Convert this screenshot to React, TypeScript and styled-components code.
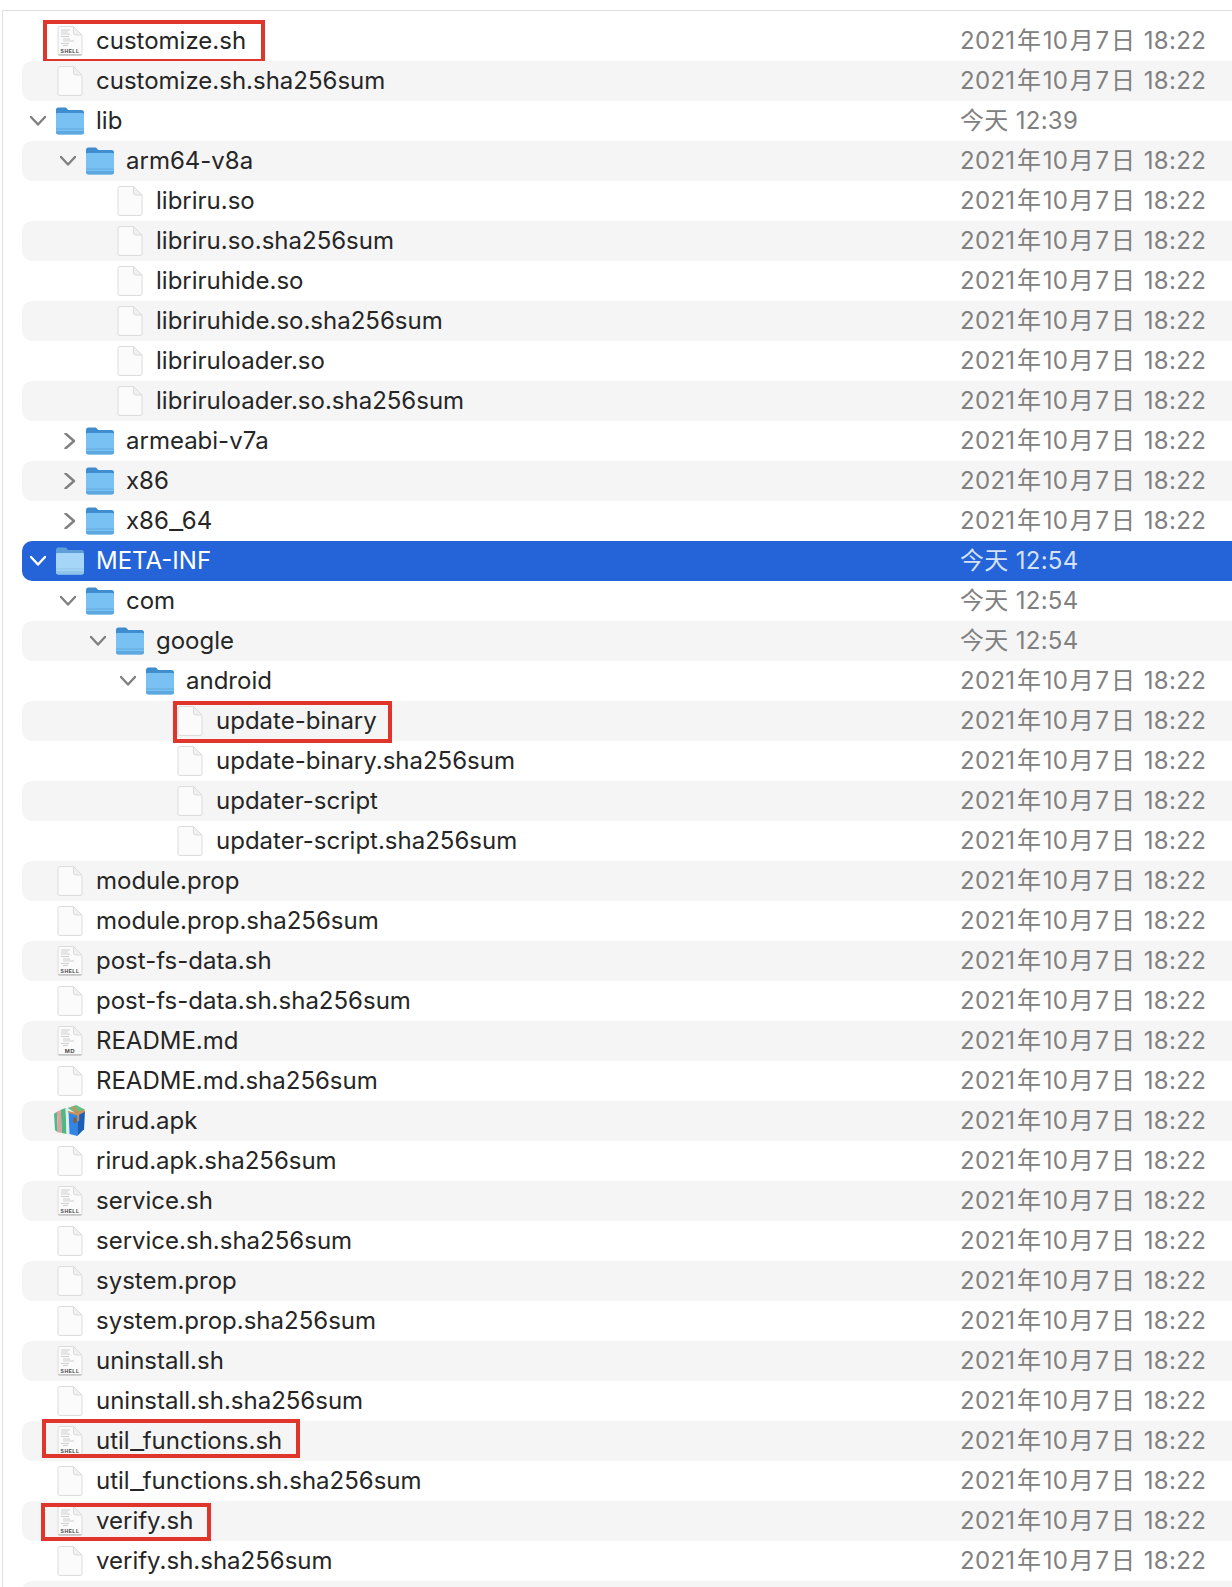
import React from "react";
import styled, { createGlobalStyle } from "styled-components";

const GlobalStyle = createGlobalStyle`
  html, body {
    margin: 0;
    padding: 0;
    background: #fff;
  }
`;

type Kind = "folder" | "file" | "shell" | "md" | "apk";
type Entry = {
  name: string;
  depth: number;
  kind: Kind;
  open?: boolean;
  date?: string;
  selected?: boolean;
  mark?: { left: number; width: number; top: number; height: number };
};

const OLD = "2021年10月7日 18:22";

const entries: Entry[] = [
  { name: "customize.sh", depth: 0, kind: "shell", mark: { left: 21, width: 222, top: -1, height: 43 } },
  { name: "customize.sh.sha256sum", depth: 0, kind: "file" },
  { name: "lib", depth: 0, kind: "folder", open: true, date: "今天 12:39" },
  { name: "arm64-v8a", depth: 1, kind: "folder", open: true },
  { name: "libriru.so", depth: 2, kind: "file" },
  { name: "libriru.so.sha256sum", depth: 2, kind: "file" },
  { name: "libriruhide.so", depth: 2, kind: "file" },
  { name: "libriruhide.so.sha256sum", depth: 2, kind: "file" },
  { name: "libriruloader.so", depth: 2, kind: "file" },
  { name: "libriruloader.so.sha256sum", depth: 2, kind: "file" },
  { name: "armeabi-v7a", depth: 1, kind: "folder", open: false },
  { name: "x86", depth: 1, kind: "folder", open: false },
  { name: "x86_64", depth: 1, kind: "folder", open: false },
  { name: "META-INF", depth: 0, kind: "folder", open: true, date: "今天 12:54", selected: true },
  { name: "com", depth: 1, kind: "folder", open: true, date: "今天 12:54" },
  { name: "google", depth: 2, kind: "folder", open: true, date: "今天 12:54" },
  { name: "android", depth: 3, kind: "folder", open: true },
  { name: "update-binary", depth: 4, kind: "file", mark: { left: 151, width: 219, top: 0, height: 42 } },
  { name: "update-binary.sha256sum", depth: 4, kind: "file" },
  { name: "updater-script", depth: 4, kind: "file" },
  { name: "updater-script.sha256sum", depth: 4, kind: "file" },
  { name: "module.prop", depth: 0, kind: "file" },
  { name: "module.prop.sha256sum", depth: 0, kind: "file" },
  { name: "post-fs-data.sh", depth: 0, kind: "shell" },
  { name: "post-fs-data.sh.sha256sum", depth: 0, kind: "file" },
  { name: "README.md", depth: 0, kind: "md" },
  { name: "README.md.sha256sum", depth: 0, kind: "file" },
  { name: "rirud.apk", depth: 0, kind: "apk" },
  { name: "rirud.apk.sha256sum", depth: 0, kind: "file" },
  { name: "service.sh", depth: 0, kind: "shell" },
  { name: "service.sh.sha256sum", depth: 0, kind: "file" },
  { name: "system.prop", depth: 0, kind: "file" },
  { name: "system.prop.sha256sum", depth: 0, kind: "file" },
  { name: "uninstall.sh", depth: 0, kind: "shell" },
  { name: "uninstall.sh.sha256sum", depth: 0, kind: "file" },
  { name: "util_functions.sh", depth: 0, kind: "shell", mark: { left: 20, width: 258, top: -2, height: 39 } },
  { name: "util_functions.sh.sha256sum", depth: 0, kind: "file" },
  { name: "verify.sh", depth: 0, kind: "shell", mark: { left: 19, width: 170, top: 2, height: 38 } },
  { name: "verify.sh.sha256sum", depth: 0, kind: "file" },
];

const Chevron: React.FC<{ open: boolean; color: string }> = ({ open, color }) => (
  <ChevronSvg viewBox="0 0 16 16">
    <path
      d={open ? "M1 4l7 7.5L15 4" : "M5.5 0.5L14 8l-8.5 7.5"}
      fill="none"
      stroke={color}
      strokeWidth="2.4"
      strokeLinecap="round"
      strokeLinejoin="round"
    />
  </ChevronSvg>
);

const FolderIcon: React.FC<{ selected?: boolean }> = ({ selected }) => (
  <IconSvg viewBox="0 0 28 28">
    <path
      d="M0 3a2.5 2.5 0 0 1 2.5-2.5h6.2c1.2 0 1.8.5 2.6 1.4l1 1.1H25.5A2.5 2.5 0 0 1 28 5.5V12H0z"
      fill={selected ? "#5f9ed6" : "#3f8ccf"}
    />
    <path
      d="M0 7.4c0-.8.6-1.4 1.4-1.4h25.2c.8 0 1.4.6 1.4 1.4V25a2.5 2.5 0 0 1-2.5 2.5h-23A2.5 2.5 0 0 1 0 25z"
      fill={selected ? "#a5d6f7" : "#79c1f3"}
    />
    <rect x="0" y="21.5" width="28" height="1" fill={selected ? "#8fc4ea" : "#5ea9e0"} />
    <path
      d="M0 24h28v1a2.5 2.5 0 0 1-2.5 2.5h-23A2.5 2.5 0 0 1 0 25z"
      fill={selected ? "#8fc4ea" : "#5da8df"}
    />
  </IconSvg>
);

const Sheet: React.FC = () => (
  <>
    <path
      d="M3 .5h13.5L25 9v18.5a2 2 0 0 1-2 2H3a2 2 0 0 1-2-2v-25a2 2 0 0 1 2-2z"
      fill="#fbfbfb"
      stroke="#dcdcdc"
      strokeWidth="1"
    />
    <path d="M16.5.5V7a2 2 0 0 0 2 2H25z" fill="#f0f0f0" stroke="#dcdcdc" strokeWidth="1" />
  </>
);

const FileIcon: React.FC = () => (
  <IconSvg viewBox="0 0 26 30">
    <Sheet />
  </IconSvg>
);

const ScriptIcon: React.FC<{ label: string }> = ({ label }) => (
  <IconSvg viewBox="0 0 26 30">
    <Sheet />
    <path
      d="M4 4h9M4 6h7M4 8h9M4 10.5h8M6 13h7M6 15h11M4 17.5h8M6 19.5h5"
      stroke="#cfcfcf"
      strokeWidth="1"
      fill="none"
    />
    <rect x="1.5" y="28" width="23" height="1.5" fill="#c4c4c4" />
    <IconLabel x="13" y="26.5" $small={label.length > 2}>
      {label}
    </IconLabel>
  </IconSvg>
);

const ApkIcon: React.FC = () => (
  <ApkSvg viewBox="0 0 34 32">
    <path d="M1 9l3-2 1 21-3-2z" fill="#45c08c" />
    <path d="M4 7l4-2 1 24-4-1z" fill="#ee9ba0" />
    <path d="M8 5l5-2 1 27-5-1z" fill="#4fb984" />
    <path d="M13 3l3-1 1 29-3-1z" fill="#e8eef0" />
    <path d="M15 3l9-3 9 5-9 4z" fill="#5fc389" />
    <path d="M16 7l9 3v22l-8-2z" fill="#2f86e6" />
    <path d="M25 10l8-4-1 19-7 7z" fill="#1b5fb8" />
    <path d="M19 2l3-1 4 6 6-2.5 1 2.5-6 3v6l-2 1v-6l-9-3-1-2 8 2z" fill="#c98f5a" />
    <path d="M21 13l3 1v5l-3-1z" fill="#8a5a34" />
  </ApkSvg>
);

const iconFor = (e: Entry) => {
  if (e.kind === "folder") return <FolderIcon selected={e.selected} />;
  if (e.kind === "shell") return <ScriptIcon label="SHELL" />;
  if (e.kind === "md") return <ScriptIcon label="MD" />;
  if (e.kind === "apk") return <ApkIcon />;
  return <FileIcon />;
};

// 年月日 sit a little apart from the digits
const DateText: React.FC<{ text: string }> = ({ text }) => (
  <>
    {text.split(/([年月日])/).map((part, i) =>
      /[年月日]/.test(part) ? <Han key={i}>{part}</Han> : <React.Fragment key={i}>{part}</React.Fragment>
    )}
  </>
);

// the underscore is wider in the reference's font
const NameText: React.FC<{ text: string }> = ({ text }) => (
  <>
    {text.split(/(_)/).map((part, i) =>
      part === "_" ? <Under key={i}>_</Under> : <React.Fragment key={i}>{part}</React.Fragment>
    )}
  </>
);

const App: React.FC = () => {
  return (
    <Page>
      <GlobalStyle />
      <Panel>
        {entries.map((e, i) => (
          <Row key={e.name} $striped={i % 2 === 1} $selected={!!e.selected}>
            <Name $depth={e.depth}>
              <Toggle>
                {e.kind === "folder" && <Chevron open={!!e.open} color={e.selected ? "#fff" : "#808080"} />}
              </Toggle>
              <IconSlot>{iconFor(e)}</IconSlot>
              <Label $selected={!!e.selected}>
                <NameText text={e.name} />
              </Label>
            </Name>
            <DateCell $selected={!!e.selected}>
              <DateText text={e.date || OLD} />
            </DateCell>
            {e.mark && <Mark $left={e.mark.left} $width={e.mark.width} $top={e.mark.top} $height={e.mark.height} />}
          </Row>
        ))}
        <Row $striped $selected={false} />
      </Panel>
    </Page>
  );
};

const Page = styled.div`
  height: 1587px;
  overflow: hidden;
  padding: 10px 0 0 2px;
  box-sizing: border-box;
`;
const Panel = styled.div`
  border-top: 1.5px solid #dedede;
  border-left: 1.5px solid #e2e2e6;
  padding: 9.5px 0 0 18.5px;
  height: 100%;
`;
const Row = styled.div<{ $striped: boolean; $selected: boolean }>`
  position: relative;
  display: flex;
  align-items: center;
  height: 40px;
  border-radius: 10px 0 0 10px;
  background: ${(p) => (p.$selected ? "#2464d8" : p.$striped ? "#f5f5f5" : "transparent")};
`;
const Name = styled.div<{ $depth: number }>`
  flex: 1;
  display: flex;
  align-items: center;
  padding-left: ${(p) => 8 + p.$depth * 30}px;
`;
const Toggle = styled.div`
  width: 16px;
  height: 16px;
  margin-right: 10px;
  flex: none;
`;
const ChevronSvg = styled.svg`
  display: block;
  width: 16px;
  height: 16px;
`;
const IconSlot = styled.div`
  width: 28px;
  height: 30px;
  flex: none;
  display: flex;
  align-items: center;
  justify-content: center;
  margin-right: 12.5px;
`;
const IconSvg = styled.svg`
  display: block;
  width: 28px;
  height: 30px;
`;
const ApkSvg = styled.svg`
  display: block;
  flex: none;
  width: 33px;
  height: 31px;
`;
const IconLabel = styled.text<{ $small: boolean }>`
  font-family: "Liberation Sans", sans-serif;
  font-size: ${(p) => (p.$small ? 5 : 6)}px;
  font-weight: 700;
  letter-spacing: 0.5px;
  fill: #444;
  text-anchor: middle;
`;
const Label = styled.span<{ $selected: boolean }>`
  font-family: Inter, "Liberation Sans", sans-serif;
  font-size: 24px;
  line-height: 38px;
  height: 38px;
  color: ${(p) => (p.$selected ? "#fff" : "#262626")};
  white-space: nowrap;
`;
const Under = styled.span`
  display: inline-block;
  width: 13px;
  transform: scaleX(1.3);
  transform-origin: left;
`;
const DateCell = styled.div<{ $selected: boolean }>`
  width: 272px;
  flex: none;
  height: 36px;
  line-height: 36px;
  font-family: Inter, "Noto Sans CJK SC", sans-serif;
  font-size: 24px;
  letter-spacing: 0.3px;
  color: ${(p) => (p.$selected ? "#d5e1f7" : "#808080")};
  white-space: nowrap;
`;
const Han = styled.span`
  margin: 0 1.5px;
`;
const Mark = styled.div<{ $left: number; $width: number; $top: number; $height: number }>`
  position: absolute;
  box-sizing: border-box;
  left: ${(p) => p.$left}px;
  top: ${(p) => p.$top}px;
  width: ${(p) => p.$width}px;
  height: ${(p) => p.$height}px;
  border: 4px solid #e0352b;
`;

export default App;
